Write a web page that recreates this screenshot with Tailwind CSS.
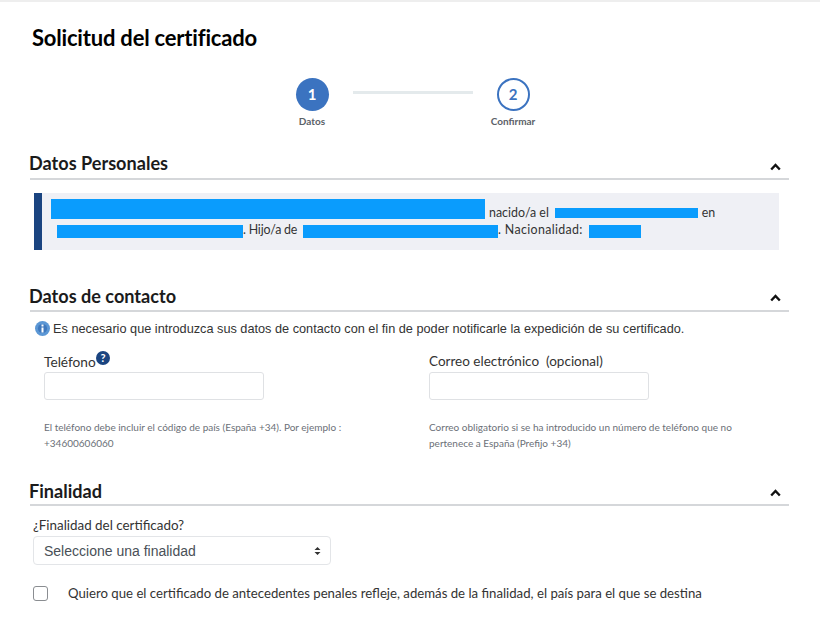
<!DOCTYPE html>
<html lang="es">
<head>
  <meta charset="UTF-8" />
  <meta name="viewport" content="width=device-width, initial-scale=1.0" />
  <title>Solicitud del certificado</title>
  <script src="https://cdn.jsdelivr.net/npm/@tailwindcss/browser@4"></script>
</head>
<body class="bg-white h-[620px] overflow-hidden font-['Lato',sans-serif] text-[#212529]">

  <!-- Línea superior -->
  <div class="h-[2px] bg-[#eeeeee]"></div>

  <!-- Título -->
  <h1 class="pl-[32px] pt-[22px] h-[70px] text-[22px] leading-[28px] font-bold text-black tracking-[-0.2px]">Solicitud del certificado</h1>

  <!-- Pasos -->
  <div class="h-[78px] flex pl-[282px]">
    <div class="w-[60px] flex flex-col items-center">
      <div class="size-[33px] rounded-full bg-[#3b73c0] text-white flex items-center justify-center text-[15px] font-bold mt-[6px]">1</div>
      <span class="mt-[3px] text-[10px] leading-[14px] font-bold text-[#5b6168]">Datos</span>
    </div>
    <div class="w-[120px] h-[3px] bg-[#e4eaec] mt-[19px] ml-[11px] mr-[10px]"></div>
    <div class="w-[60px] flex flex-col items-center">
      <div class="size-[33px] rounded-full border-2 border-[#3b73c0] text-[#3b73c0] flex items-center justify-center text-[15px] font-bold mt-[6px]">2</div>
      <span class="mt-[3px] text-[10px] leading-[14px] font-bold text-[#5b6168]">Confirmar</span>
    </div>
  </div>

  <!-- Datos Personales -->
  <div class="ml-[30px] w-[759px] h-[30px] border-b-2 border-[#d5d7da] flex items-center justify-between pb-[2px]">
    <h2 class="text-[18.1px] font-bold text-[#1b1b1b] ml-[-1px] mt-[2px]">Datos Personales</h2>
    <svg class="mr-[8px] mt-[8px]" width="11" height="8" viewBox="0 0 11 8"><path d="M1.2 6.5 5.5 2l4.3 4.5" fill="none" stroke="#111" stroke-width="2.4"/></svg>
  </div>

  <div class="ml-[34px] mt-[13px] w-[745px] h-[57px] bg-[#eff0f5] border-l-[8px] border-[#1a4480] text-[12.4px] text-[#333] leading-[16px]">
    <div class="flex items-end h-[26px] pl-[9px]">
      <span class="w-[434px] h-[20px] bg-[#0a9cfd]"></span>
      <span class="ml-[4px] h-[13px] leading-[13px]">nacido/a el</span>
      <span class="ml-[6px] w-[143px] h-[10px] mb-[1px] bg-[#0a9cfd]"></span>
      <span class="ml-[4px] h-[13px] leading-[13px]">en</span>
    </div>
    <div class="flex items-end h-[19px] pl-[15px]">
      <span class="w-[186px] h-[13px] bg-[#0a9cfd]"></span>
      <span class="w-[60px] tracking-[-0.2px]">. Hijo/a de</span>
      <span class="w-[195px] h-[13px] bg-[#0a9cfd]"></span>
      <span class="w-[91px] tracking-[0.35px]">. Nacionalidad:</span>
      <span class="w-[52px] h-[13px] bg-[#0a9cfd]"></span>
    </div>
  </div>

  <!-- Datos de contacto -->
  <div class="ml-[30px] mt-[30px] w-[759px] h-[32px] border-b-2 border-[#d5d7da] flex items-center justify-between pt-[2px]">
    <h2 class="text-[18.1px] font-bold text-[#1b1b1b] ml-[-1px] mt-[2px]">Datos de contacto</h2>
    <svg class="mr-[8px] mt-[4px]" width="11" height="8" viewBox="0 0 11 8"><path d="M1.2 6.5 5.5 2l4.3 4.5" fill="none" stroke="#111" stroke-width="2.4"/></svg>
  </div>

  <div class="flex items-center pl-[35px] mt-[7px] h-[19px] font-['Liberation_Sans',sans-serif] text-[12.72px] text-[#333]">
    <svg class="mr-[3px]" width="15" height="15" viewBox="0 0 15 15"><circle cx="7.5" cy="7.5" r="7.5" fill="#5b97d5"/><circle cx="7.5" cy="7.5" r="4.6" fill="#3f78bd"/><rect x="6.5" y="6.5" width="2" height="5" fill="#fff"/><rect x="6.5" y="3.5" width="2" height="2" fill="#fff"/></svg>
    <span>Es necesario que introduzca sus datos de contacto con el fin de poder notificarle la expedición de su certificado.</span>
  </div>

  <div class="flex mt-[14px]">
    <div class="ml-[44px] w-[385px]">
      <label class="flex items-start h-[20px] text-[13.7px] leading-[19px] text-[#333]">Teléfono
        <svg class="mt-[-1px]" width="14" height="14" viewBox="0 0 14 14"><circle cx="7" cy="7" r="7" fill="#1a4480"/><text x="7" y="11" text-anchor="middle" font-size="11" font-weight="700" fill="#fff" font-family="Lato">?</text></svg>
      </label>
      <input type="text" class="block w-[220px] h-[28px] border border-[#dfe1e4] rounded-[3px] bg-white" />
      <p class="mt-[19px] w-[310px] text-[10px] leading-[16px] text-[#6b7077]">El teléfono debe incluir el código de país (España +34). Por ejemplo : +34600606060</p>
    </div>
    <div class="w-[340px]">
      <label class="block h-[20px] text-[13.5px] leading-[19px] text-[#333] whitespace-pre">Correo electrónico  (opcional)</label>
      <input type="text" class="block w-[220px] h-[28px] border border-[#dfe1e4] rounded-[3px] bg-white" />
      <p class="mt-[19px] w-[315px] text-[10px] leading-[16px] text-[#6b7077]">Correo obligatorio si se ha introducido un número de teléfono que no pertenece a España (Prefijo +34)</p>
    </div>
  </div>

  <!-- Finalidad -->
  <div class="ml-[30px] mt-[23px] w-[759px] h-[32px] border-b-2 border-[#d5d7da] flex items-center justify-between pt-[4px]">
    <h2 class="text-[18.1px] font-bold text-[#1b1b1b] ml-[-1px] mt-[2px]">Finalidad</h2>
    <svg class="mr-[8px] mt-[4px]" width="11" height="8" viewBox="0 0 11 8"><path d="M1.2 6.5 5.5 2l4.3 4.5" fill="none" stroke="#111" stroke-width="2.4"/></svg>
  </div>

  <div class="pl-[33px] mt-[11px]">
    <div class="text-[13.4px] leading-[17px] text-[#333]">¿Finalidad del certificado?</div>
    <div class="mt-[2px] w-[298px] h-[29px] border border-[#e3e5e8] rounded-[4px] flex items-center justify-between pl-[10px] pr-[9px] font-['Liberation_Sans',sans-serif] text-[14px] text-[#495057]">
      <span class="pt-[2px]">Seleccione una finalidad</span>
      <svg width="7" height="10" viewBox="0 0 7 10"><path d="M3.5 1 6.5 4H.5zM3.5 9 .5 6h6z" fill="#333"/></svg>
    </div>
    <div class="flex items-center mt-[19px]">
      <span class="size-[15px] border border-[#8a8d91] rounded-[3px] bg-white"></span>
      <span class="ml-[20px] text-[13.2px] leading-[18px] text-[#333]">Quiero que el certificado de antecedentes penales refleje, además de la finalidad, el país para el que se destina</span>
    </div>
  </div>

</body>
</html>
